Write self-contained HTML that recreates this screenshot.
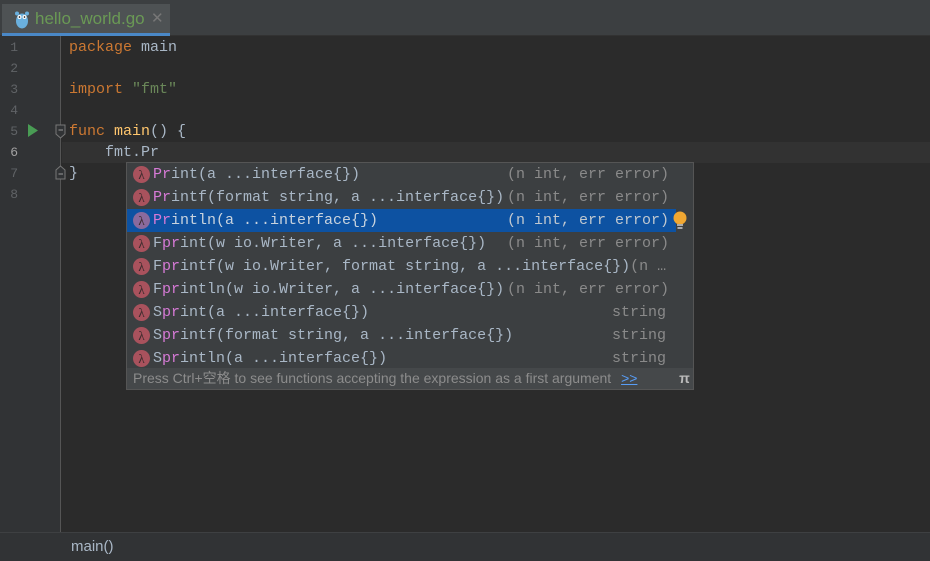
<!DOCTYPE html><html><head><style>
*{margin:0;padding:0;box-sizing:border-box}
body{width:930px;height:561px;background:#2b2b2b;position:relative;overflow:hidden;font-family:"Liberation Mono",monospace;font-size:15px}
.abs{position:absolute}
.tabbar{left:0;top:0;width:930px;height:36px;background:#3c3f41;border-bottom:1px solid #323232}
.tab{left:2px;top:4px;width:168px;height:32px;background:#4e5254;border-bottom:3px solid #4a88c7}
.gutter{left:0;top:36px;width:61px;height:496px;background:#313335;border-right:1px solid #555}
.ln{left:0;width:18px;text-align:right;color:#606366;font-size:13px;height:21px;line-height:21px}
.code{left:69px;height:21px;line-height:21px;white-space:pre;color:#a9b7c6}
.kw{color:#cc7832}.str{color:#6a8759}.fn{color:#ffc66d}
.cur{left:62px;top:142px;width:868px;height:21px;background:#323232}
.popup{left:126px;top:162px;width:568px;height:228px;background:#3c3f41;border:1px solid #555}
.row{position:absolute;left:0;width:549px;height:23px;line-height:23px;white-space:pre;color:#a9b7c6}
.row .i{position:absolute;left:6px;top:3px;width:17px;height:17px;border-radius:50%;background:#a9525d;color:#3a2a2c;font-family:"Liberation Serif",serif;font-size:13px;line-height:17px;text-align:center}
.row .t{position:absolute;left:26px}
.row .r{position:absolute;left:380px;color:#8a8a8a}
.row .s{position:absolute;left:485px;color:#8a8a8a}
.p{color:#d67ad6}
.sel{background:#0d52a2}
.foot{position:absolute;left:0;top:205px;width:549px;height:21px;background:#45484a;font-family:"Liberation Sans","Noto Sans CJK SC",sans-serif;font-size:14px;color:#8c8c8c;line-height:21px;padding-left:6px;white-space:nowrap}
.bottom{left:0;top:532px;width:930px;height:29px;background:#313335;border-top:1px solid #3e4042;font-family:"Liberation Sans",sans-serif;font-size:15px;color:#a9b7c6;line-height:28px;padding-left:71px}
</style></head><body>
<div class="abs tabbar"></div>
<div class="abs tab"></div>
<svg class="abs" style="left:14px;top:10px" width="16" height="19" viewBox="0 0 16 19"><ellipse cx="8" cy="11" rx="6" ry="7.5" fill="#6ab0de"/><circle cx="3" cy="3.5" r="2" fill="#6ab0de"/><circle cx="13" cy="3.5" r="2" fill="#6ab0de"/><circle cx="5.5" cy="7" r="2" fill="#fff"/><circle cx="10.5" cy="7" r="2" fill="#fff"/><circle cx="5.5" cy="7" r="0.8" fill="#000"/><circle cx="10.5" cy="7" r="0.8" fill="#000"/></svg>
<div class="abs" style="left:35px;top:9px;font-family:'Liberation Sans',sans-serif;font-size:17px;color:#6a9955">hello_world.go</div>
<div class="abs" style="left:151px;top:9px;font-family:'Liberation Sans',sans-serif;font-size:15px;color:#777">✕</div>
<div class="abs gutter"></div>
<div class="abs cur"></div>
<div class="abs ln" style="top:37px">1</div><div class="abs ln" style="top:58px">2</div><div class="abs ln" style="top:79px">3</div><div class="abs ln" style="top:100px">4</div><div class="abs ln" style="top:121px">5</div><div class="abs ln" style="top:142px;color:#a4a3a3">6</div><div class="abs ln" style="top:163px">7</div><div class="abs ln" style="top:184px">8</div>
<svg class="abs" style="left:28px;top:124px" width="11" height="13"><polygon points="0,0 10,6.5 0,13" fill="#499c54"/></svg>
<svg class="abs" style="left:55px;top:124px" width="12" height="16"><path d="M1 1H10V10L5.5 14L1 10Z" fill="#313335" stroke="#777"/><path d="M3.5 6H8" stroke="#999"/></svg>
<svg class="abs" style="left:55px;top:164px" width="12" height="16"><path d="M1 15H10V6L5.5 2L1 6Z" fill="#313335" stroke="#777"/><path d="M3.5 10H8" stroke="#999"/></svg>
<div class="abs code" style="top:37px"><span class="kw">package</span> main</div>
<div class="abs code" style="top:79px"><span class="kw">import</span> <span class="str">"fmt"</span></div>
<div class="abs code" style="top:121px"><span class="kw">func</span> <span class="fn">main</span>() {</div>
<div class="abs code" style="top:142px">    fmt.Pr</div>
<div class="abs code" style="top:163px">}</div>
<div class="abs popup">
<div class="row" style="top:0"><span class="i">λ</span><span class="t"><span class="p">Pr</span>int(a ...interface{})</span><span class="r">(n int, err error)</span></div>
<div class="row" style="top:23px"><span class="i">λ</span><span class="t"><span class="p">Pr</span>intf(format string, a ...interface{})</span><span class="r">(n int, err error)</span></div>
<div class="row sel" style="top:46px"><span class="i" style="background:#8a6a9d">λ</span><span class="t" style="color:#c8d3de"><span class="p">Pr</span>intln(a ...interface{})</span><span class="r" style="color:#c0c8d0">(n int, err error)</span></div>
<div class="row" style="top:69px"><span class="i">λ</span><span class="t">F<span class="p">pr</span>int(w io.Writer, a ...interface{})</span><span class="r">(n int, err error)</span></div>
<div class="row" style="top:92px"><span class="i">λ</span><span class="t">F<span class="p">pr</span>intf(w io.Writer, format string, a ...interface{})<span style="color:#8a8a8a">(n …</span></span></div>
<div class="row" style="top:115px"><span class="i">λ</span><span class="t">F<span class="p">pr</span>intln(w io.Writer, a ...interface{})</span><span class="r">(n int, err error)</span></div>
<div class="row" style="top:138px"><span class="i">λ</span><span class="t">S<span class="p">pr</span>int(a ...interface{})</span><span class="s">string</span></div>
<div class="row" style="top:161px"><span class="i">λ</span><span class="t">S<span class="p">pr</span>intf(format string, a ...interface{})</span><span class="s">string</span></div>
<div class="row" style="top:184px"><span class="i">λ</span><span class="t">S<span class="p">pr</span>intln(a ...interface{})</span><span class="s">string</span></div>
<div class="foot">Press Ctrl+空格 to see functions accepting the expression as a first argument <span style="color:#589df6;text-decoration:underline;margin-left:6px">&gt;&gt;</span></div>
<div style="position:absolute;left:549px;top:205px;width:17px;height:21px;background:#45484a;color:#bbb;font-family:'Liberation Sans',sans-serif;font-weight:bold;font-size:14px;line-height:21px;text-align:center">π</div>
</div>
<svg class="abs" style="left:672px;top:211px" width="16" height="20"><circle cx="8" cy="7" r="6.5" fill="#f0a732"/><rect x="5" y="13" width="6" height="2" fill="#aaa"/><rect x="5.5" y="16" width="5" height="2" fill="#aaa"/></svg>
<div class="abs bottom">main()</div>
</body></html>
